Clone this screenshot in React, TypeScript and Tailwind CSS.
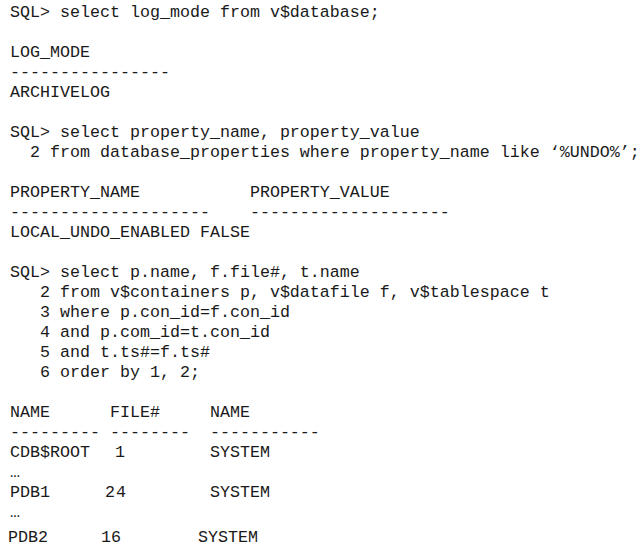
import * as React from "react"

const queryLines = [
  "SQL> select log_mode from v$database;",
  "",
  "LOG_MODE",
  "----------------",
  "ARCHIVELOG",
  "",
  "SQL> select property_name, property_value",
  "  2 from database_properties where property_name like ‘%UNDO%’;",
  "",
  "PROPERTY_NAME           PROPERTY_VALUE",
  "--------------------    --------------------",
  "LOCAL_UNDO_ENABLED FALSE",
  "",
  "SQL> select p.name, f.file#, t.name",
  "   2 from v$containers p, v$datafile f, v$tablespace t",
  "   3 where p.con_id=f.con_id",
  "   4 and p.com_id=t.con_id",
  "   5 and t.ts#=f.ts#",
  "   6 order by 1, 2;",
  "",
  "NAME      FILE#     NAME",
  "--------- --------  -----------",
]

export default function App() {
  return (
    <div className="min-h-screen bg-white">
      <div className="whitespace-pre pl-[10px] pt-[3px] font-['Liberation_Mono',monospace] text-[16.67px] leading-5 text-[#1a1a1a]">
        {queryLines.map((line, index: number) => (
          <div key={index} className="h-5">
            {line}
          </div>
        ))}
        {/* result rows aren't on the char grid in the original */}
        <div className="flex h-5">
          <span className="w-[105px]">CDB$ROOT</span>
          <span className="w-[95px]">1</span>
          <span>SYSTEM</span>
        </div>
        <div className="h-5">…</div>
        <div className="flex h-5">
          <span className="w-[95px]">PDB1</span>
          <span className="w-[105px] tracking-[1px]">24</span>
          <span>SYSTEM</span>
        </div>
        <div className="h-5">…</div>
        <div className="-ml-[2px] mt-[5px] flex h-5">
          <span className="w-[93px]">PDB2</span>
          <span className="w-[97px]">16</span>
          <span>SYSTEM</span>
        </div>
      </div>
    </div>
  )
}
